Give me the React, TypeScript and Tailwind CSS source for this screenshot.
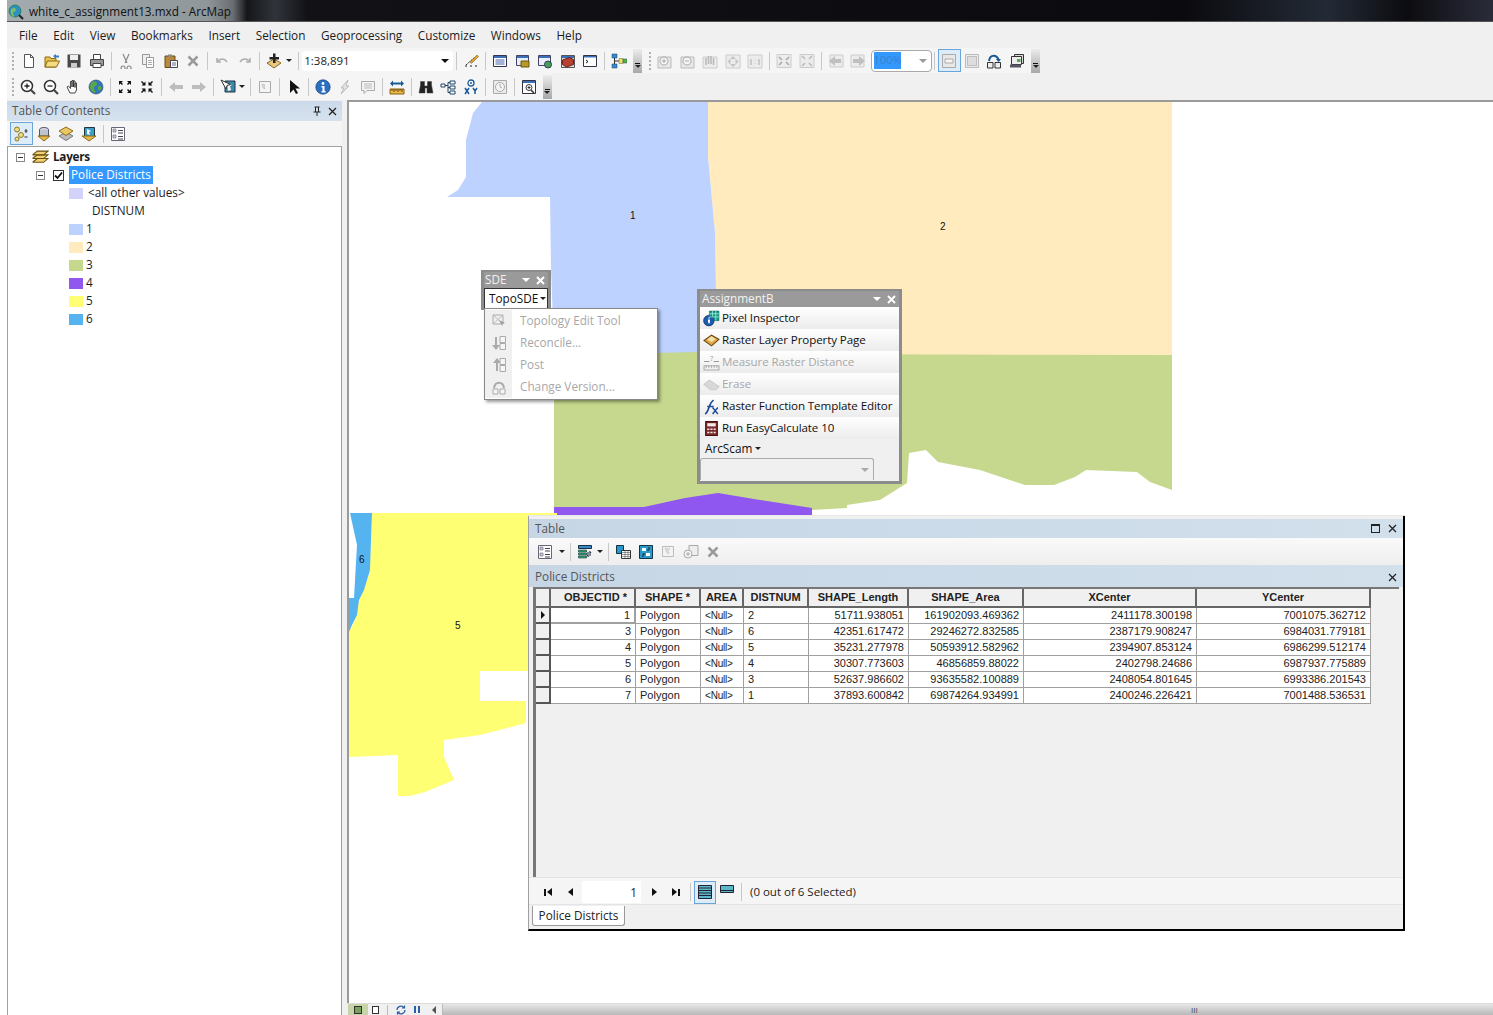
import type { ReactNode } from 'react'

const UI = "[font-family:'Open_Sans',sans-serif]"

// 16x16 toolbar pictures, drawn by hand to stay close to the ArcGIS glyphs
function Ico({ children, s = 16, dim }: { children: ReactNode; s?: number; dim?: boolean }) {
  return (
    <svg width={s} height={s} viewBox="0 0 16 16" className={dim ? 'opacity-40 grayscale' : ''}>
      {children}
    </svg>
  )
}

const icons: Record<string, ReactNode> = {
  newdoc: <path d="M3.5 1.5h6l3 3v10h-9z M9.5 1.5v3h3" fill="#fff" stroke="#555" />,
  open: <><path d="M1 14V4h5l1 1.5h5V14z" fill="#e8c050" stroke="#8a6a10" /><path d="M1 14l2.500-6h12l-3 6z" fill="#f6dc80" stroke="#8a6a10" /><path d="M9 3l3-2v1.500h3v2h-3V6z" fill="#3a7ac8" /></>,
  save: <><path d="M1.500 1.500h13v13h-13z" fill="#4a4a4a" /><path d="M4 2h8v5H4z" fill="#eee" /><path d="M5 10h6v4.500H5z" fill="#ccc" /></>,
  print: <><path d="M4.500 1.500h7v5h-7z" fill="#fff" stroke="#444" /><path d="M1.500 6.500h13v6h-13z" fill="#999" stroke="#444" /><path d="M4 10.500h8v4H4z" fill="#fff" stroke="#444" /></>,
  cut: <path d="M5 1l4 9M11 1L7 10M5 13a2 2 0 1 0 .1 0M11 13a2 2 0 1 0 .1 0" fill="none" stroke="#888" strokeWidth="1.200" />,
  copy: <><path d="M2.500 1.500h7v10h-7z" fill="#eee" stroke="#999" /><path d="M6.500 4.500h7v10h-7z" fill="#fff" stroke="#999" /><path d="M8 7.500h4M8 9.500h4M8 11.500h4" stroke="#aaa" /></>,
  paste: <><path d="M2 3h10v11.500H2z" fill="#b98a3c" stroke="#6b4d18" /><path d="M5 1.500h4V4H5z" fill="#888" /><path d="M7.500 7.500h7v7h-7z" fill="#fff" stroke="#445" /><path d="M9 10h4M9 12h4" stroke="#668" /></>,
  del: <path d="M3.500 3.500l9 9M12.500 3.500l-9 9" stroke="#9a9a9a" strokeWidth="2.500" />,
  undo: <path d="M3 5v4h4M3.500 9c2-4 7-4 9.500 0" fill="none" stroke="#b0b0b0" strokeWidth="1.600" />,
  redo: <path d="M13 5v4H9M12.500 9c-2-4-7-4-9.500 0" fill="none" stroke="#b0b0b0" strokeWidth="1.600" />,
  add: <><path d="M8 6l7 4-7 5-7-5z" fill="#e8c880" stroke="#8a6a20" /><path d="M7 .5h2.500V4H13v2.500H9.500V10H7V6.500H3.500V4H7z" fill="#222" /></>,
  editor: <><path d="M2 13h3M7 13h3M12 13h3M3 12l9-8" stroke="#222" strokeDasharray="2 1" /><path d="M7 9l7-7 1.500 1.500-7 7z" fill="#e0a030" stroke="#7a5010" strokeWidth=".5" /></>,
  win: <><path d="M1.500 2.500h13v11h-13z" fill="#fff" stroke="#335" /><path d="M2 3h12v2H2z" fill="#3a70b8" /><path d="M3.500 7h9M3.500 9h9M3.500 11h9" stroke="#46a" /></>,
  catalog: <><path d="M1.500 2.500h12v10h-12z" fill="#e8eef6" stroke="#446" /><path d="M2 3h11v2H2z" fill="#3a70b8" /><path d="M6 8h8v6H6z" fill="#b89828" stroke="#6a5510" /></>,
  search: <><path d="M1.500 2.500h12v10h-12z" fill="#eef" stroke="#446" /><path d="M2 3h11v2H2z" fill="#3a70b8" /><circle cx="11" cy="11.500" r="3.500" fill="#4a9a5a" stroke="#245" /></>,
  toolbox: <><path d="M1.500 2.500h13v12h-13z" fill="#ddd" stroke="#555" /><path d="M2 3h12v2H2z" fill="#3a70b8" /><path d="M2.500 7l7-2.500 4 2v5l-7 2.500-4-2.500z" fill="#b84030" stroke="#6a2018" /></>,
  python: <><path d="M1.500 2.500h13v11h-13z" fill="#fff" stroke="#334" /><path d="M2 3h12v1.500H2z" fill="#3a70b8" /><path d="M4 7l2 1.500L4 10" fill="none" stroke="#111" /></>,
  model: <><path d="M1 1h5v4H1zM1 11h5v4H1z" fill="#3a86d8" stroke="#145" strokeWidth=".5" /><path d="M3.500 5v6M3.500 8H9" stroke="#333" /><path d="M8 5.500h4v5H8z" fill="#f0e060" stroke="#665" strokeWidth=".5" /><path d="M12 6h4v4h-4z" fill="#50b050" stroke="#254" strokeWidth=".5" /></>,
  zin: <><path d="M1 4h13v11H1z" fill="#e8e8e8" stroke="#bbb" /><circle cx="7" cy="8" r="4" fill="#f5f5f5" stroke="#bbb" strokeWidth="1.300" /><path d="M5 8h4M7 6v4" stroke="#aaa" /></>,
  zout: <><path d="M1 4h13v11H1z" fill="#e8e8e8" stroke="#bbb" /><circle cx="7" cy="8" r="4" fill="#f5f5f5" stroke="#bbb" strokeWidth="1.300" /><path d="M5 8h4" stroke="#aaa" /></>,
  phand: <><path d="M1 4h14v11H1z" fill="#ececec" stroke="#ccc" /><path d="M4 12V5M6.500 11V3M9 11V3M11.500 12V5" stroke="#bbb" strokeWidth="1.600" /></>,
  pfull: <><path d="M1 2h14v13H1z" fill="#ececec" stroke="#ccc" /><path d="M8 3l3 3H5zM8 14l3-3H5zM2.500 8.500l3-3v6zM13.500 8.500l-3-3v6z" fill="#c4c4c4" /></>,
  p11: <><path d="M1 2h14v13H1z" fill="#ececec" stroke="#ccc" /><path d="M4 6v6M8 7v.5M8 10v.5M12 6v6" stroke="#bbb" strokeWidth="1.300" /></>,
  pin4: <><path d="M1 1.500h14v13H1z" fill="#ececec" stroke="#ccc" /><path d="M3 4l3 3M13 4l-3 3M3 12l3-3M13 12l-3-3" stroke="#aaa" strokeWidth="1.600" /></>,
  pout4: <><path d="M1 1.500h14v13H1z" fill="#ececec" stroke="#ccc" /><path d="M6 6L3 3M10 6l3-3M6 10l-3 3M10 10l3 3" stroke="#bbb" strokeWidth="1.600" /></>,
  pback: <><path d="M2 2h13v12H2z" fill="#ececec" stroke="#ccc" /><path d="M1 8l6-5v3h6v4H7v3z" fill="#c0c0c0" /></>,
  pfwd: <><path d="M1 2h13v12H1z" fill="#ececec" stroke="#ccc" /><path d="M15 8L9 3v3H3v4h6v3z" fill="#c0c0c0" /></>,
  layout: <><path d="M1.500 1.500h13v13h-13z" fill="#e8e8e8" stroke="#aaa" /><path d="M4 6h8v4H4z" fill="#f6f6f6" stroke="#aaa" /></>,
  dots: <><path d="M1.500 1.500h13v13h-13z" fill="#ececec" stroke="#bbb" /><path d="M3.500 3.500h9v9h-9z" fill="#ddd" stroke="#999" strokeDasharray="1 1" /></>,
  ver: <><path d="M1.500 9.500h5.500v5.500H1.500zM9 9.500h5.500v5.500H9z" fill="#eee" stroke="#333" /><path d="M3 8c1-7 8-7 10 0" fill="none" stroke="#1a5a98" strokeWidth="2" /><path d="M10 6h5l-2.500 3z" fill="#1a5a98" /></>,
  stack: <><path d="M5.500 1.500h9v9h-9z" fill="#ddd" stroke="#333" /><path d="M2.500 3.500h10v8h-10z" fill="#eee" stroke="#333" /><path d="M8 6h3.500v3H8z" fill="#58a858" /><path d="M1 11.500h11v3H1z" fill="#556" /></>,
  zi: <><circle cx="7" cy="7" r="5.500" fill="#fff" stroke="#333" strokeWidth="1.500" /><path d="M4.500 7h5M7 4.500v5" stroke="#222" strokeWidth="1.300" /><path d="M11 11l4 4" stroke="#444" strokeWidth="2.200" /></>,
  zo: <><circle cx="7" cy="7" r="5.500" fill="#fff" stroke="#333" strokeWidth="1.500" /><path d="M4.500 7h5" stroke="#222" strokeWidth="1.300" /><path d="M11 11l4 4" stroke="#444" strokeWidth="2.200" /></>,
  hand: <path d="M5 14L2 8l1.500-1 2 2.500V2.500h1.500V8V1.500h1.500V8V2h1.500v6.500V4h1.500v7l-1.500 3z" fill="#fff" stroke="#333" strokeWidth=".9" />,
  globe: <><circle cx="8" cy="8" r="7" fill="#2f78c0" stroke="#345" strokeWidth=".6" /><path d="M4 3c3-1 5 0 5 2S6 7 6 9s2 3 1 5c-3-1-5-3-5-6 0-2 1-4 2-5zM11 7c2 0 3 1 2 3s-3 2-3 0 0-3 1-3z" fill="#5ca848" /></>,
  fin: <path d="M2 2h4L4.500 3.500 6 5 5 6 3.500 4.500 2 6zM14 2h-4l1.500 1.500L10 5l1 1 1.500-1.500L14 6zM2 14h4l-1.500-1.500L6 11l-1-1-1.500 1.500L2 10zM14 14h-4l1.500-1.500L10 11l1-1 1.500 1.500L14 10z" fill="#111" />,
  fout: <path d="M6.500 6.500h-4L4 5 2 3l1-1 2 2 1.500-1.500zM9.500 6.500h4L12 5l2-2-1-1-2 2-1.500-1.500zM6.500 9.500h-4L4 11l-2 2 1 1 2-2 1.500 1.500zM9.500 9.500h4L12 11l2 2-1 1-2-2-1.500 1.500z" fill="#111" />,
  back: <path d="M1 8l6-5v3h8v4H7v3z" fill="#bdbdbd" />,
  fwd: <path d="M15 8L9 3v3H1v4h8v3z" fill="#bdbdbd" />,
  selfeat: <><path d="M5 2h10v11H5z" fill="#3a8aa8" stroke="#234" /><path d="M7 4l5 2-2 1 1 4-3 1z" fill="#f6f6f6" /><path d="M1 1l5 9 1-3.500 3.500-1z" fill="#fff" stroke="#333" /></>,
  clear: <><path d="M2.500 2.500h11v11h-11z" fill="#f4f4f4" stroke="#aaa" /><path d="M5 5l3 1-1 1 1 3-2-1z" fill="#ddd" stroke="#aaa" strokeWidth=".5" /></>,
  arrow: <path d="M4 1v13l3.500-3.500L10 15l2-1-2.500-4.500H14z" fill="#111" />,
  info: <><circle cx="8" cy="8" r="7.200" fill="#2a6fc4" stroke="#15406f" strokeWidth=".7" /><circle cx="8" cy="4.500" r="1.400" fill="#fff" /><path d="M6.500 7h3v5h1v1.500h-4V12h1V8.500h-1z" fill="#fff" /></>,
  bolt: <path d="M11 1L4 9h3l-3 6 8-8H9z" fill="#e4e4e4" stroke="#bbb" />,
  tip: <><path d="M1.500 2.500h13v9H7l-3 3v-3H1.500z" fill="#f4f4f4" stroke="#aaa" /><path d="M4 5h8M4 7h8M4 9h8" stroke="#bbb" /></>,
  measure: <><path d="M1 10h14v5H1z" fill="#e8b848" stroke="#8a6010" /><path d="M3 10v2M5 10v3M7 10v2M9 10v3M11 10v2M13 10v3" stroke="#6a4808" /><path d="M1 4.500l3-3v2h8v-2l3 3-3 3v-2H4v2z" fill="#1a5a98" /></>,
  bino: <path d="M1 14l1.500-8V2.500h4V7h3V2.500h4V6l1.500 8h-6V9h-2v5z" fill="#222" stroke="#444" strokeWidth=".5" />,
  route: <><path d="M1 5h4v3H1zM10 2h5v3h-5zM10 7h5v3h-5zM10 12h5v3h-5z" fill="#fff" stroke="#246" /><path d="M5 6.500h3M8 3.500v10M8 3.500h2M8 8.500h2M8 13.500h2" stroke="#246" /></>,
  xy: <><circle cx="8" cy="4" r="3" fill="#fff" stroke="#1a5a98" strokeWidth="1.300" /><circle cx="8" cy="4" r="1" fill="#1a5a98" /><path d="M2 9l4 6M6 9l-4 6M10 9l2 3 2-3M12 12v3" fill="none" stroke="#1a5a98" strokeWidth="1.500" /></>,
  clock: <><path d="M1.500 1.500h13v13h-13z" fill="#ececec" stroke="#aaa" /><circle cx="8" cy="8" r="4.500" fill="#f6f6f6" stroke="#aaa" /><path d="M8 5v3l2 1" fill="none" stroke="#aaa" /></>,
  magwin: <><path d="M1.500 1.500h13v13h-13z" fill="#fff" stroke="#334" /><path d="M2 2h12v2H2z" fill="#3a70b8" /><circle cx="8" cy="8.500" r="3" fill="#fff" stroke="#333" /><path d="M6.500 8.500h3M8 7v3" stroke="#333" /><path d="M10 11l3 3" stroke="#333" strokeWidth="1.500" /></>,
  tree: <><path d="M0 1h15v14H0z" fill="none" /><circle cx="4" cy="3.500" r="2.500" fill="#f2dc80" stroke="#8a7a30" /><circle cx="8" cy="9" r="2.500" fill="#f2dc80" stroke="#8a7a30" /><circle cx="4" cy="13" r="2" fill="#f2dc80" stroke="#8a7a30" /><path d="M11.500 5h3M11.500 11h3" stroke="#333" /><path d="M13 3v4" stroke="#333" /></>,
  dbdown: <><ellipse cx="8" cy="3.500" rx="4.500" ry="2" fill="#dde" stroke="#556" /><path d="M3.500 3.500v6.500h9V3.500" fill="#bcc4d0" stroke="#556" /><path d="M2 10h12l-6 5z" fill="#e8b848" stroke="#8a6a20" /></>,
  layers: <><path d="M8 6l7 4-7 4.500L1 10z" fill="#bbb" stroke="#777" /><path d="M8 1l7 4-7 4.500L1 5z" fill="#ecc860" stroke="#8a6a20" /></>,
  seldown: <><path d="M3.500 1.500h10v9h-10z" fill="#38a0c8" stroke="#234" /><path d="M6 3l4 2-2 1 1 3-3-1z" fill="#fff" /><path d="M1 10h14l-7 5z" fill="#e8b848" stroke="#8a6a20" /></>,
  options: <><path d="M1.500 1.500h13v13h-13z" fill="#fff" stroke="#667" /><path d="M3 3h3v3H3zM3 9h3v3H3z" fill="#ccd" stroke="#445" strokeWidth=".5" /><path d="M8 4.500h5M8 7h5M8 10.500h5M8 13h5" stroke="#445" /></>,
  lyrstack: <><path d="M1 12l4-3h10l-4 3.500H1z" fill="#f0d070" stroke="#6a5010" /><path d="M1 8.500l4-3h10l-4 3.500H1z" fill="#f0d070" stroke="#6a5010" /><path d="M1 5l4-3h10l-4 3.500H1z" fill="#f0d070" stroke="#6a5010" /></>,
  topo: <><path d="M2 2h10v9H2z" fill="none" stroke="#aaa" /><path d="M2 2l10 9M12 2L2 11" stroke="#bbb" /><path d="M8 7l6 3-3 1 1 3z" fill="#999" /></>,
  recon: <><path d="M4 2v8H1l4 5 4-5H6V2z" fill="#aaa" /><path d="M9 1.500h5.500v6H9zM9 8.500h5.500v6H9z" fill="#f5f5f5" stroke="#aaa" /></>,
  post: <><path d="M5 14V6H2l4-5 4 5H7v8z" fill="#aaa" /><path d="M9 1.500h5.500v6H9zM9 8.500h5.500v6H9z" fill="#f5f5f5" stroke="#aaa" /></>,
  change: <><path d="M2 10h5v5H2zM9 10h5v5H9z" fill="#f5f5f5" stroke="#aaa" /><path d="M3 9c1-7 9-7 10 0" fill="none" stroke="#aaa" strokeWidth="2" /></>,
  pixel: <><circle cx="5.500" cy="10" r="5" fill="#1a5ab0" stroke="#123" strokeWidth=".5" /><path d="M5 7h1.500v1H5zM4.500 9h2v3.500h-1.500z" fill="#fff" /><path d="M6 1h9v9H10V6H6z" fill="#1a9a88" stroke="#0a5a50" strokeWidth=".5" /><path d="M9 1v5M12 1v9M6 3.500h9M6 6.500h9" stroke="#bfe" strokeWidth=".6" /></>,
  rlayer: <><path d="M1 8l7-5 7 4-7 6z" fill="#e0a848" stroke="#6a4a10" /><path d="M4 7l4-3 4 2.500-4 3z" fill="#f4e0a8" /></>,
  measq: <><path d="M1 11h14v4H1z" fill="#f0f0f0" stroke="#aaa" /><path d="M3 11v2M5.500 11v2M8 11v2M10.500 11v2M13 11v2" stroke="#aaa" /><path d="M1 7h5M10 7h5" stroke="#999" /><text x="8" y="7" textAnchor="middle" fontSize="7" fill="#999">?</text></>,
  erase: <path d="M1 8l5-4 9 6-3 3H7z" fill="#d8d8d8" stroke="#ccc" />,
  fx: <><path d="M2 15c4-2 3-10 8-13" fill="none" stroke="#1a4a98" strokeWidth="1.600" /><path d="M4 8h6M9 9l5 6M14 9l-5 6" stroke="#1a4a98" strokeWidth="1.300" /></>,
  calc: <><path d="M2.500 1.500h11v13h-11z" fill="#7a2a2a" stroke="#4a1010" /><path d="M4 3h8v3H4z" fill="#f4e8e8" /><path d="M4 8h2v1.500H4zM7 8h2v1.500H7zM10 8h2v1.500h-2zM4 11h2v1.500H4zM7 11h2v1.500H7zM10 11h2v1.500h-2z" fill="#f4e8e8" /></>,
  tablesel: <><path d="M1.500 1.500h7v8h-7z" fill="#2a98c8" stroke="#134" /><path d="M6.500 6.500h9v8h-9z" fill="#fff" stroke="#333" /><path d="M7 8.500h8M7 10.500h8M7 12.500h8M10 7v7M13 7v7" stroke="#555" strokeWidth=".6" /></>,
  tablesw: <><path d="M1.500 1.500h13v13h-13z" fill="#2a98c8" stroke="#134" /><path d="M4 4h4v3H4zM8 9h4v3H8z" fill="#fff" /><path d="M11 3v3h-2M5 13v-3h2" fill="none" stroke="#123" /></>,
  tclear: <><path d="M2.500 2.500h11v10h-11z" fill="#f4f4f4" stroke="#bbb" /><path d="M5 4l5 1-2 1 1 4-2-1z" fill="#ddd" stroke="#bbb" strokeWidth=".5" /></>,
  tzoom: <><path d="M6 1.500h9v10H6z" fill="#eee" stroke="#aaa" /><circle cx="5" cy="10" r="4" fill="#f4f4f4" stroke="#aaa" /><path d="M3 10h4M5 8v4" stroke="#aaa" /></>,
  rel: <><path d="M1.500 1.500h13v3h-13z" fill="#3a86c8" stroke="#134" /><path d="M1.500 6h8v2h-8zM1.500 9h8v2h-8zM1.500 12h8v2h-8z" fill="#3aa868" stroke="#134" strokeWidth=".6" /><path d="M10 9h4l-1.500-2M14 11h-4l1.500 2" fill="none" stroke="#123" /></>,
  allrec: <><path d="M1.500 1.500h13v13h-13z" fill="#5ab8c8" stroke="#223" /><path d="M2 4h12M2 6.500h12M2 9h12M2 11.500h12" stroke="#223" /></>,
  selrec: <><path d="M1.500 1.500h13v7h-13z" fill="#5ab8c8" stroke="#223" /><path d="M2 6.500h12" stroke="#223" /></>,
}

function Btn({ n, active, dim }: { n: string; active?: boolean; dim?: boolean }) {
  return (
    <div className={`flex h-[23px] w-[22.5px] shrink-0 items-center justify-center ${active ? 'border border-[#6aa4d8] bg-[#dcecf8]' : ''}`}>
      <Ico dim={dim}>{icons[n]}</Ico>
    </div>
  )
}

function Sep() {
  return (
    <div className="flex w-[6.5px] shrink-0 justify-center">
      <div className="h-[18px] w-px bg-[#c8c8c8]" />
    </div>
  )
}

function Caret({ className = '' }: { className?: string }) {
  return <span className={`inline-block h-0 w-0 shrink-0 border-x-[3px] border-t-[3px] border-x-transparent border-t-[#222] ${className}`} />
}

function Grip({ className = '' }: { className?: string }) {
  return (
    <div className={`flex shrink-0 flex-col justify-center gap-[2px] ${className}`}>
      {[0, 1, 2, 3, 4].map((i) => <span key={i} className="h-[2px] w-[2px] bg-[#b0b0b0]" />)}
    </div>
  )
}

function Overflow({ className = '' }: { className?: string }) {
  return (
    <div className={`flex h-[24px] w-[9px] shrink-0 flex-col items-center justify-end gap-px bg-gradient-to-b from-[#ececec] to-[#a8a8a8] pb-[5px] ${className}`}>
      <span className="h-px w-[5px] bg-[#111]" />
      <Caret />
    </div>
  )
}

const MENU = ['File', 'Edit', 'View', 'Bookmarks', 'Insert', 'Selection', 'Geoprocessing', 'Customize', 'Windows', 'Help']

function Toolbars() {
  return (
    <div className="shrink-0">
      <div className="flex h-[26px] items-center gap-[15.6px] pl-3 pt-[2px] text-[#1c1c1c]">
        {MENU.map((m) => <span key={m}>{m}</span>)}
      </div>
      <div className="flex h-[25px] w-fit items-center rounded-sm bg-[#f5f5f5]">
        <Grip className="ml-[5px] w-[5.750px]" />
        {['newdoc', 'open', 'save', 'print'].map((n) => <Btn key={n} n={n} />)}
        <Sep />
        {['cut', 'copy', 'paste', 'del'].map((n) => <Btn key={n} n={n} />)}
        <Sep />
        <Btn n="undo" /><Btn n="redo" />
        <Sep />
        <Btn n="add" />
        <Caret className="ml-[1px] mr-[3px]" />
        <Sep />
        <div className="ml-[1px] flex h-[20px] w-[151px] items-center justify-between rounded-sm bg-white pl-[2px] pr-1 text-[11.500px] text-[#222]">
          <span>1:38,891</span>
          <span className="inline-block h-0 w-0 border-x-4 border-t-4 border-x-transparent border-t-[#111]" />
        </div>
        <Sep />
        <Btn n="editor" />
        <Sep />
        {['win', 'catalog', 'search', 'toolbox', 'python'].map((n) => <Btn key={n} n={n} />)}
        <Sep />
        <Btn n="model" />
        <Overflow className="ml-[3px]" />
        <Grip className="w-[11.750px] pl-[7px]" />
        {['zin', 'zout', 'phand', 'pfull', 'p11'].map((n) => <Btn key={n} n={n} />)}
        <Sep />
        <Btn n="pin4" /><Btn n="pout4" />
        <Sep />
        <Btn n="pback" /><Btn n="pfwd" />
        <div className="ml-[1px] flex h-[22px] w-[61px] items-center justify-between rounded-sm border border-[#aaa] bg-white pl-[2px] pr-1 text-[11px]">
          <span className="bg-[#3399ff] text-[#3a7fd0]">100%</span>
          <span className="inline-block h-0 w-0 border-x-4 border-t-4 border-x-transparent border-t-[#999]" />
        </div>
        <Sep />
        <Btn n="layout" active />
        <Btn n="dots" />
        <Btn n="ver" />
        <Btn n="stack" />
        <Overflow className="ml-[3px]" />
      </div>
      <div className="flex h-[27px] w-fit items-center rounded-sm bg-[#f5f5f5]">
        <Grip className="ml-[5px] w-[4.750px]" />
        {['zi', 'zo', 'hand', 'globe'].map((n) => <Btn key={n} n={n} />)}
        <Sep />
        <Btn n="fin" /><Btn n="fout" />
        <Sep />
        <Btn n="back" /><Btn n="fwd" />
        <Sep />
        <Btn n="selfeat" />
        <Caret className="mr-[2px]" />
        <Sep />
        <Btn n="clear" />
        <Sep />
        <Btn n="arrow" />
        <Sep />
        <Btn n="info" /><Btn n="bolt" /><Btn n="tip" />
        <Sep />
        <Btn n="measure" />
        <Sep />
        <Btn n="bino" /><Btn n="route" /><Btn n="xy" />
        <Sep />
        <Btn n="clock" />
        <Sep />
        <Btn n="magwin" />
        <Overflow className="ml-[3px]" />
      </div>
    </div>
  )
}

const LEGEND = [
  { c: '#bed2ff', t: '1' },
  { c: '#ffebbe', t: '2' },
  { c: '#c5d88d', t: '3' },
  { c: '#9056f0', t: '4' },
  { c: '#ffff73', t: '5' },
  { c: '#55b4f0', t: '6' },
]

function Box({ className = '' }: { className?: string }) {
  return (
    <span className={`flex h-[9px] w-[9px] shrink-0 items-center justify-center border border-[#888] bg-white ${className}`}>
      <span className="h-px w-[5px] bg-[#333]" />
    </span>
  )
}

function Toc() {
  return (
    <aside className="flex h-full w-[335px] shrink-0 flex-col">
      <div className="mt-px flex h-[20px] items-center justify-between bg-gradient-to-b from-[#cbdaea] to-[#d6e2ee] pl-[5px] pr-[5px] text-[#555]">
        <span>Table Of Contents</span>
        <span className="flex items-center gap-[7px]">
          <svg width="8" height="10" viewBox="0 0 8 10"><path d="M1.500 1h5M2.500 1v5M5.500 1v5M.5 6h7M4 6v4" stroke="#222" fill="none" /></svg>
          <svg width="9" height="9" viewBox="0 0 9 9"><path d="M1 1l7 7M8 1L1 8" stroke="#222" strokeWidth="1.300" /></svg>
        </span>
      </div>
      <div className="flex h-[25px] items-center bg-[#f5f5f5] pl-[3px]">
        <Btn n="tree" active /><Btn n="dbdown" /><Btn n="layers" /><Btn n="seldown" />
        <Sep />
        <Btn n="options" />
      </div>
      <div className="min-h-0 flex-1 border-x border-t border-[#a0a0a0] bg-white pt-px text-[#1c1c1c]">
        <div className="flex h-[18px] items-center pl-[8px]">
          <Box />
          <span className="ml-[7px]"><Ico s={17}>{icons.lyrstack}</Ico></span>
          <span className="ml-[4px] font-bold tracking-[-0.3px]">Layers</span>
        </div>
        <div className="flex h-[18px] items-center pl-[28px]">
          <Box />
          <span className="ml-[8px] flex h-[11px] w-[11px] items-center justify-center border border-[#333] bg-white">
            <svg width="9" height="9" viewBox="0 0 9 9"><path d="M1 4.500l2.500 2.500L8 1.500" fill="none" stroke="#111" strokeWidth="1.800" /></svg>
          </span>
          <span className="ml-[5px] bg-[#3399ff] px-[2px] text-white">Police Districts</span>
        </div>
        <div className="flex h-[18px] items-center pl-[61px]">
          <span className="h-[11px] w-[14px] bg-[#d2d2fa]" />
          <span className="ml-[5px]">&lt;all other values&gt;</span>
        </div>
        <div className="flex h-[18px] items-center pl-[84px]">DISTNUM</div>
        {LEGEND.map((l) => (
          <div key={l.t} className="flex h-[18px] items-center pl-[61px]">
            <span className="h-[11px] w-[14px]" style={{ backgroundColor: l.c }} />
            <span className="ml-[3px]">{l.t}</span>
          </div>
        ))}
      </div>
    </aside>
  )
}

function GreyTitle({ title, pad }: { title: string; pad: string }) {
  return (
    <div className={`flex h-[16px] items-center justify-between bg-[#9a9a9a] pr-[3px] text-[#f2f2f2] ${pad}`}>
      <span>{title}</span>
      <span className="flex items-center gap-[6px]">
        <span className="inline-block h-0 w-0 border-x-4 border-t-4 border-x-transparent border-t-white" />
        <svg width="9" height="9" viewBox="0 0 9 9"><path d="M1 1l7 7M8 1L1 8" stroke="#fff" strokeWidth="2" /></svg>
      </span>
    </div>
  )
}

function SdeToolbar() {
  return (
    <div className="absolute left-[134px] top-[170px] h-[40px] w-[70px] border-[3px] border-t-2 border-[#8c8c8c] bg-[#8c8c8c]">
      <GreyTitle title="SDE" pad="pl-[1px]" />
      <div className="flex h-[21px] w-[64px] items-center gap-[2px] border border-[#333] bg-white pl-[4px] text-[#111]">
        TopoSDE <Caret />
      </div>
    </div>
  )
}

const SDE_ITEMS = [
  { i: 'topo', t: 'Topology Edit Tool' },
  { i: 'recon', t: 'Reconcile...' },
  { i: 'post', t: 'Post' },
  { i: 'change', t: 'Change Version...' },
]

function SdeMenu() {
  return (
    <div className="absolute left-[137px] top-[208px] w-[174px] border border-[#888] bg-white py-px text-[#a8a8a8] shadow-[2px_2px_3px_rgba(0,0,0,0.4)]">
      {SDE_ITEMS.map((m) => (
        <div key={m.t} className="flex h-[22px] items-center">
          <span className="flex h-full w-[27px] items-center justify-center bg-[#f0f0f0]"><Ico>{icons[m.i]}</Ico></span>
          <span className="ml-[8px]">{m.t}</span>
        </div>
      ))}
    </div>
  )
}

const ASSIGN_ITEMS = [
  { i: 'pixel', t: 'Pixel Inspector' },
  { i: 'rlayer', t: 'Raster Layer Property Page' },
  { i: 'measq', t: 'Measure Raster Distance', off: true },
  { i: 'erase', t: 'Erase', off: true },
  { i: 'fx', t: 'Raster Function Template Editor' },
  { i: 'calc', t: 'Run EasyCalculate 10' },
]

function AssignmentBar() {
  return (
    <div className="absolute left-[350px] top-[189px] h-[195px] w-[205px] border-[3px] border-t-2 border-[#8c8c8c] bg-[#f0f0f0]">
      <GreyTitle title="AssignmentB" pad="pl-[2px]" />
      <div className="text-[#111]">
        {ASSIGN_ITEMS.map((a) => (
          <div key={a.t} className={`flex h-[22px] items-center bg-gradient-to-b from-white to-[#ececec] pl-[3px] ${a.off ? 'text-[#a8a8a8]' : ''}`}>
            <Ico s={17}>{icons[a.i]}</Ico>
            <span className="ml-[2px] whitespace-nowrap text-[11.600px] tracking-[-0.1px]">{a.t}</span>
          </div>
        ))}
        <div className="flex h-[19px] items-center gap-[3px] pl-[5px]">ArcScam <Caret /></div>
      </div>
      <div className="flex h-[22px] w-[174px] items-center justify-end rounded-t-[3px] border border-b-0 border-[#aaa] pr-[4px]">
        <span className="inline-block h-0 w-0 border-x-4 border-t-4 border-x-transparent border-t-[#aaa]" />
      </div>
    </div>
  )
}

const COLS = [15, 85, 65, 43, 65, 100, 115, 173, 174]
const HEADS: [string, string][] = [
  ['OBJECTID *', 'pl-[13px] text-left'],
  ['SHAPE *', 'text-center'],
  ['AREA', 'text-center'],
  ['DISTNUM', 'text-center'],
  ['SHAPE_Length', 'text-center'],
  ['SHAPE_Area', 'text-center'],
  ['XCenter', 'text-center'],
  ['YCenter', 'text-center'],
]
const ROWS = [
  ['1', '2', '51711.938051', '161902093.469362', '2411178.300198', '7001075.362712'],
  ['3', '6', '42351.617472', '29246272.832585', '2387179.908247', '6984031.779181'],
  ['4', '5', '35231.277978', '50593912.582962', '2394907.853124', '6986299.512174'],
  ['5', '4', '30307.773603', '46856859.88022', '2402798.24686', '6987937.775889'],
  ['6', '3', '52637.986602', '93635582.100889', '2408054.801645', '6993386.201543'],
  ['7', '1', '37893.600842', '69874264.934991', '2400246.226421', '7001488.536531'],
]

function Grid() {
  const td = 'h-[16px] overflow-hidden border-r border-b border-[#a0a0a0] bg-white p-0 leading-none whitespace-nowrap'
  return (
    <table className="table-fixed border-separate border-spacing-0 text-[11px] leading-none text-[#222] [font-family:'Liberation_Sans',Arial,sans-serif]" style={{ width: 835 }}>
      <colgroup>
        {COLS.map((w, i) => <col key={i} style={{ width: w }} />)}
      </colgroup>
      <thead>
        <tr>
          <th className="h-[19px] border-r-2 border-b-2 border-[#666] bg-[#f0f0f0] p-0" />
          {HEADS.map(([h, cls]) => (
            <th key={h} className={`h-[19px] border-r-2 border-b-2 border-[#666] bg-[#f0f0f0] p-0 font-bold ${cls}`}>{h}</th>
          ))}
        </tr>
      </thead>
      <tbody>
        {ROWS.map((r, i) => (
          <tr key={r[0]}>
            <td className="h-[16px] border-r-2 border-b-2 border-[#555] bg-[#f0f0f0] p-0">
              {i === 0 && <span className="ml-[5px] block h-0 w-0 border-y-[4px] border-l-[4px] border-y-transparent border-l-[#111]" />}
            </td>
            <td className={`${td} pr-[4px] text-right ${i === 0 ? 'border-r-2 border-b-2 border-[#333]' : ''}`}>{r[0]}</td>
            <td className={`${td} pl-[4px]`}>Polygon</td>
            <td className={`${td} pl-[4px] text-[10px] tracking-[-0.2px]`}>&lt;Null&gt;</td>
            <td className={`${td} pl-[4px]`}>{r[1]}</td>
            <td className={`${td} pr-[4px] text-right`}>{r[2]}</td>
            <td className={`${td} pr-[4px] text-right`}>{r[3]}</td>
            <td className={`${td} pr-[4px] text-right`}>{r[4]}</td>
            <td className={`${td} pr-[4px] text-right`}>{r[5]}</td>
          </tr>
        ))}
      </tbody>
    </table>
  )
}

function NavTri({ dir, bar }: { dir: 'l' | 'r'; bar?: boolean }) {
  const tri = dir === 'l'
    ? 'border-r-[5px] border-r-[#111]'
    : 'border-l-[5px] border-l-[#111]'
  return (
    <span className="flex w-[22px] items-center justify-center gap-px">
      {bar && dir === 'l' && <span className="h-[7px] w-[2px] bg-[#111]" />}
      <span className={`inline-block h-0 w-0 border-y-[4px] border-y-transparent ${tri}`} />
      {bar && dir === 'r' && <span className="h-[7px] w-[2px] bg-[#111]" />}
    </span>
  )
}

function TableWindow() {
  return (
    <div className="absolute left-[181px] top-[416px] flex h-[415px] w-[877px] flex-col border-r-2 border-b-2 border-l border-black border-l-[#a0a0a0] bg-[#f0f0f0] pt-[3px] shadow-[0_-1px_0_#e8e8e8]">
      <div className="flex h-[19px] shrink-0 items-center justify-between bg-gradient-to-r from-[#c6d6e5] to-[#d2e0ec] pl-[6px] pr-[6px] text-[#555]">
        <span>Table</span>
        <span className="flex items-center gap-[8px]">
          <span className="h-[9px] w-[9px] border border-t-2 border-[#222]" />
          <svg width="9" height="9" viewBox="0 0 9 9"><path d="M1 1l7 7M8 1L1 8" stroke="#222" strokeWidth="1.300" /></svg>
        </span>
      </div>
      <div className="flex h-[27px] shrink-0 items-center bg-gradient-to-b from-[#fafafa] to-[#eeeeee] pl-[5px]">
        <Btn n="options" />
        <Caret className="ml-[2px] mr-[3px]" />
        <Sep />
        <Btn n="rel" />
        <Caret className="mr-[3px]" />
        <Sep />
        <Btn n="tablesel" /><Btn n="tablesw" /><Btn n="tclear" /><Btn n="tzoom" /><Btn n="del" />
      </div>
      <div className="flex h-[22px] shrink-0 items-center justify-between bg-gradient-to-r from-[#c6d6e5] to-[#d2e0ec] pl-[6px] pr-[6px] pt-[2px] text-[#555]">
        <span>Police Districts</span>
        <svg width="9" height="9" viewBox="0 0 9 9"><path d="M1 1l7 7M8 1L1 8" stroke="#222" strokeWidth="1.300" /></svg>
      </div>
      <div className="ml-[4px] mr-[4px] min-h-0 flex-1 border-t-2 border-l-[3px] border-[#777] bg-[#f0f0f0]">
        <Grid />
      </div>
      <div className="flex h-[27px] shrink-0 items-center border-t border-[#e4e4e4] bg-[#f5f5f5] pl-[8px] pt-[2px] text-[#222]">
        <NavTri dir="l" bar />
        <NavTri dir="l" />
        <span className="ml-[1px] w-[59px] bg-white pr-[4px] text-right leading-[22px]">1</span>
        <span className="ml-[2px] flex"><NavTri dir="r" /><NavTri dir="r" bar /></span>
        <Sep />
        <Btn n="allrec" active />
        <Btn n="selrec" />
        <Sep />
        <span className="ml-[5px] text-[11.500px]">(0 out of 6 Selected)</span>
      </div>
      <div className="flex h-[25px] shrink-0 items-start border-t border-[#e4e4e4] pl-[3px] pt-px">
        <span className="flex h-[20px] w-[93px] items-center justify-center rounded-b-[3px] border border-t-0 border-[#999] bg-white text-[#222]">Police Districts</span>
      </div>
    </div>
  )
}

function MapCanvas() {
  return (
    <svg className="block h-[901px] w-full" viewBox="349 102 1144 901">
      <polygon fill="#ffebbe" points="706,102 1172,102 1172,355 712,355 716,290 715,233 708,157" />
      <polygon fill="#bed2ff" points="482,102 708,102 708,157 715,233 716,290 716,354 554,354 551,267 550,197 447,197 458,190 466,177 466,140 473,113" />
      <polygon fill="#c5d88d" points="554,354 600,354 700,352 716,354 1172,355 1172,490 1150,482 1137,472 1086,470 1075,477 1054,485 1025,485 980,470 938,462 926,450 909,453 907,483 880,500 847,505 847,508 812,510 554,510" />
      <polygon fill="#9056f0" points="554,507 644,507 685,498 718,493 760,500 812,508 812,516 554,516" />
      <polygon fill="#ffff73" points="372,513 557,513 557,517 528,517 528,671 480,671 480,701 526,701 526,723 480,735 444,740 444,757 454,780 425,792 410,796 398,796 398,755 375,756 349,757 349,632 355,620 358,600 369,575 371,540" />
      <polygon fill="#55b4f0" points="350,513 372,513 371,540 370,570 364,590 359,600 357,615 352,625 349,632 349,598 354,598 357,545" />
      <g fontFamily="'Liberation Sans', Arial, sans-serif" fontSize="10" fill="#111">
        <text x="630" y="219">1</text>
        <text x="940" y="230">2</text>
        <text x="455" y="629">5</text>
        <text x="359" y="563">6</text>
      </g>
    </svg>
  )
}

export default function App() {
  return (
    <div className={`h-[1015px] w-[1493px] overflow-hidden bg-white pl-[7px] text-[11.750px] ${UI}`}>
      <div className="flex h-full flex-col bg-[#f0f0f0]">
        {/* glass title bar */}
        <div className="flex h-[22px] shrink-0 items-center gap-[5px] border-b border-[#555] bg-[linear-gradient(90deg,#a5acb0_0px,#8f979b_200px,#6a6e72_226px,#15161a_240px,#30343a_268px,#121216_300px,#0b0b0f_1180px,#232a36_1320px,#0c0c10_1400px,#2a2c3a_1486px)] pl-[1px] pt-[2px] text-[#111]">
          <svg width="16" height="16" viewBox="0 0 16 16">
            <circle cx="7" cy="7" r="6" fill="#2f8fc0" stroke="#173" strokeWidth=".7" />
            <path d="M3 5c3-2 5-1 5 1s-3 1-3 3 2 2 1 4c-3-1-4-4-3-8z" fill="#7ac060" />
            <path d="M11 11l4 4" stroke="#222" strokeWidth="2" />
          </svg>
          <span>white_c_assignment13.mxd - ArcMap</span>
        </div>
        <Toolbars />
        <div className="flex min-h-0 flex-1">
          <Toc />
          <div className="w-[5px] shrink-0" />
          <main className="relative flex h-full min-w-0 flex-1 flex-col">
            <div className="min-h-0 flex-1 border-t-2 border-l-2 border-[#9a9a9a] bg-white">
              <MapCanvas />
            </div>
            <div className="flex h-[12px] shrink-0 items-center overflow-hidden border-t border-[#dcdcdc] bg-[#f0f0f0] pl-[1px]">
              <span className="flex h-[12px] w-[20px] items-center justify-center bg-[#c8d4a8]"><span className="h-[8px] w-[8px] border border-[#333] bg-[#7aa060]" /></span>
              <span className="ml-[4px] h-[8px] w-[7px] border border-[#333] bg-white" />
              <span className="mx-[8px] h-[10px] w-px bg-[#bbb]" />
              <svg width="10" height="10" viewBox="0 0 10 10"><path d="M1 5a4 4 0 0 1 7-2.500M9 5a4 4 0 0 1-7 2.500M8.500 .5v2.500H6M1.500 9.500V7H4" fill="none" stroke="#2a5ea8" strokeWidth="1.200" /></svg>
              <span className="ml-[8px] h-[7px] w-[6px] border-x-2 border-[#2a5ea8]" />
              <span className="ml-[12px] inline-block h-0 w-0 border-y-[4px] border-r-[4px] border-y-transparent border-r-[#555]" />
              <span className="ml-[6px] h-full w-px bg-[#bbb]" />
              <div className="h-full flex-1 bg-gradient-to-b from-[#e8e8e8] to-[#b8b8b8] pl-[748px] text-[8px] leading-[12px] text-[#444]">III</div>
            </div>
            <SdeToolbar />
            <SdeMenu />
            <AssignmentBar />
            <TableWindow />
          </main>
        </div>
      </div>
    </div>
  )
}
